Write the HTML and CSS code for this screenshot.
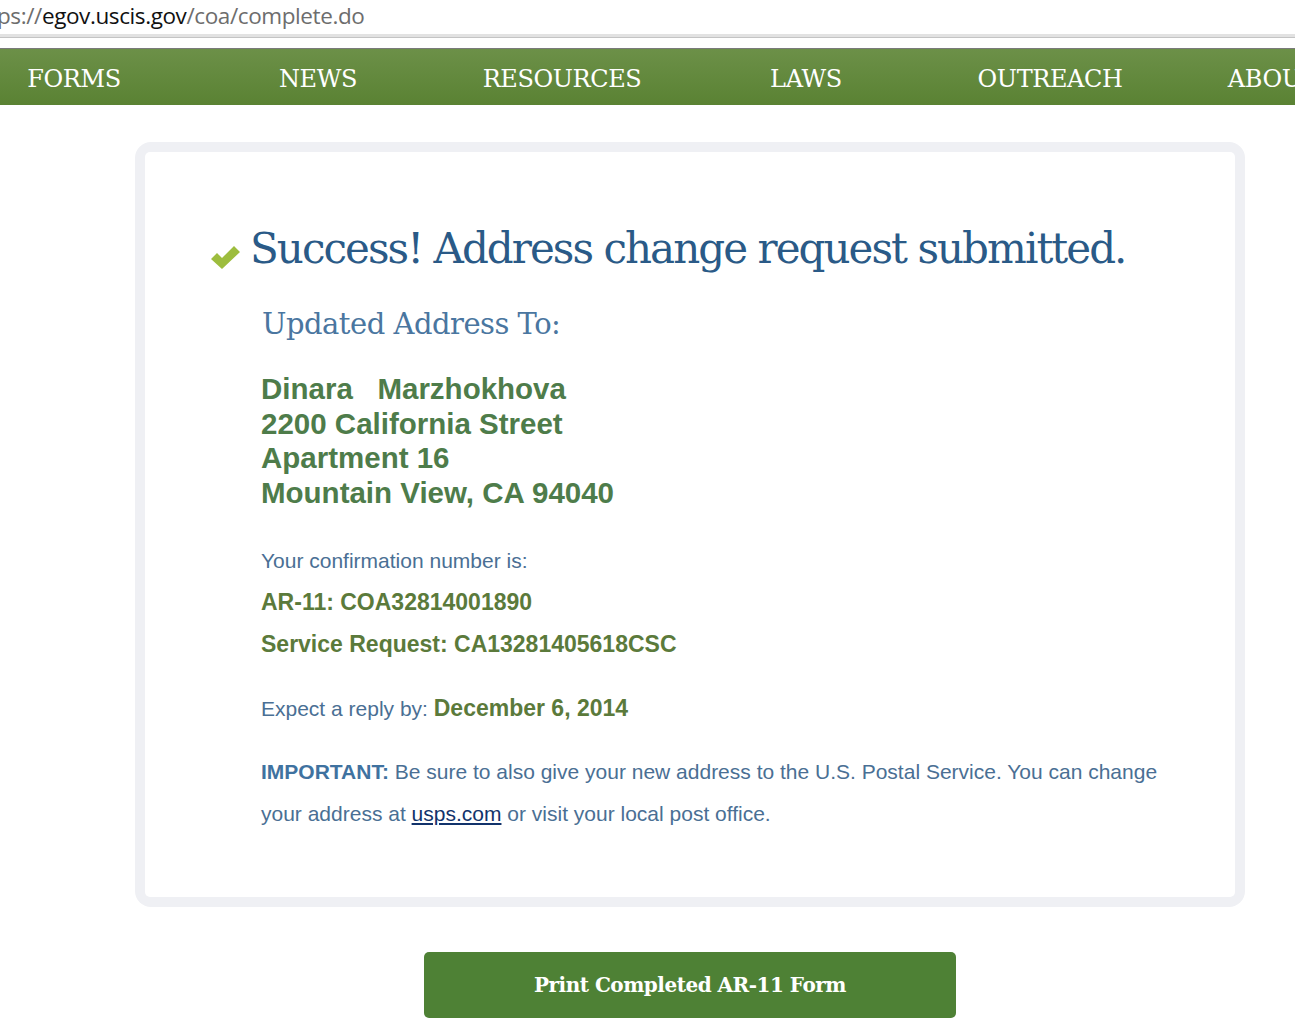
FILE: index.html
```html
<!DOCTYPE html>
<html lang="en">
<head>
<meta charset="utf-8">
<title>Address change request submitted</title>
<link rel="stylesheet" href="styles.css">
</head>
<body>
<div class="urlbar"><span class="proto">ps://</span><span class="domain">egov.uscis.gov</span><span class="path">/coa/complete.do</span></div>
<div class="chrome-sep"></div>
<nav class="topnav">
  <a class="nav-item">FORMS</a>
  <a class="nav-item">NEWS</a>
  <a class="nav-item">RESOURCES</a>
  <a class="nav-item">LAWS</a>
  <a class="nav-item">OUTREACH</a>
  <a class="nav-item">ABOUT US</a>
</nav>
<main class="page">
  <section class="card">
    <div class="card-inner">
      <h1 class="success">
        <svg class="check" width="31" height="25" viewBox="0 0 31 25"><path d="M1 15 L7 9 L12 14 L24 2 L30 8 L12 25 Z" fill="#9dbd3e"/></svg>
        <span>Success! Address change request submitted.</span>
      </h1>
      <div class="content">
        <h2 class="updated">Updated Address To:</h2>
        <div class="address">
          <div>Dinara&nbsp;&nbsp;&nbsp;Marzhokhova</div>
          <div>2200 California Street</div>
          <div>Apartment 16</div>
          <div>Mountain View, CA 94040</div>
        </div>
        <p class="label">Your confirmation number is:</p>
        <p class="code">AR-11: COA32814001890</p>
        <p class="code">Service Request: CA13281405618CSC</p>
        <p class="expect">Expect a reply by: <strong>December 6, 2014</strong></p>
        <p class="important"><strong>IMPORTANT:</strong> Be sure to also give your new address to the U.S. Postal Service. You can change your address at <a href="#" class="link">usps.com</a> or visit your local post office.</p>
      </div>
    </div>
  </section>
  <div class="actions">
    <button class="print-btn">Print Completed AR-11 Form</button>
  </div>
</main>
</body>
</html>
```
FILE: styles.css
```css
html, body {
  margin: 0;
  padding: 0;
  background: #ffffff;
  overflow: hidden;
}
body {
  width: 1295px;
  height: 1026px;
  font-family: "Liberation Sans", Arial, sans-serif;
}
.urlbar {
  height: 34px;
  line-height: 32px;
  font-family: "Open Sans", "Noto Sans", sans-serif;
  font-size: 22.5px;
  color: #6d6d6d;
  white-space: nowrap;
  margin-left: -3px;
  letter-spacing: -0.4px;
}
.urlbar .domain { color: #111111; }
.chrome-sep {
  height: 3px;
  background: #e2e2e2;
  border-bottom: 1px solid #c4c4c4;
  margin-bottom: 10px;
}
.topnav {
  display: flex;
  height: 56px;
  border-top: 1px solid #7a7a7a;
  background: linear-gradient(#6c9048, #5a8233);
  margin-left: -48px;
  white-space: nowrap;
}
.nav-item {
  flex: 0 0 244px;
  text-align: center;
  color: #ffffff;
  font-family: "DejaVu Serif", Georgia, serif;
  font-size: 24px;
  line-height: 61px;
  letter-spacing: -0.4px;
}
.page {
  padding-top: 37px;
}
.card {
  margin-left: 135px;
  width: 1110px;
  box-sizing: border-box;
  background: #eff0f4;
  border-radius: 16px;
  padding: 10px;
}
.card-inner {
  background: #ffffff;
  border-radius: 5px;
  height: 745px;
  box-sizing: border-box;
  padding: 72px 0 0 65px;
}
.success {
  margin: 0;
  display: flex;
  align-items: center;
  gap: 9px;
  font-family: "DejaVu Serif", Georgia, serif;
  font-weight: normal;
  font-size: 42px;
  color: #2a5a87;
  letter-spacing: -1.95px;
  line-height: 50px;
}
.check { margin-top: 14px; }
.content {
  padding-left: 51px;
}
.updated {
  margin: 30px 0 0 1px;
  font-family: "DejaVu Serif", Georgia, serif;
  font-weight: normal;
  font-size: 29px;
  line-height: 40px;
  color: #4a76a0;
  letter-spacing: -0.5px;
}
.address {
  margin-top: 28px;
  font-weight: bold;
  font-size: 29.5px;
  line-height: 34.5px;
  color: #4e7c4a;
}
.label {
  margin: 38px 0 0;
  font-size: 21px;
  line-height: 26px;
  color: #4a6f94;
}
.code {
  margin: 15px 0 0;
  font-weight: bold;
  font-size: 23px;
  line-height: 26px;
  color: #5b7a3b;
}
.code + .code { margin-top: 16px; }
.expect {
  margin: 38px 0 0;
  font-size: 21px;
  line-height: 26px;
  color: #4a6f94;
}
.expect strong {
  font-size: 23px;
  color: #5b7a3b;
}
.important {
  margin: 29px 0 0;
  max-width: 910px;
  font-size: 21px;
  line-height: 42px;
  color: #4a6f94;
}
.important strong { color: #3f72a0; }
.link {
  color: #12336b;
  text-decoration: underline;
}
.actions {
  display: flex;
  justify-content: center;
  margin-left: 135px;
  width: 1110px;
  padding-top: 45px;
}
.print-btn {
  width: 532px;
  height: 66px;
  border: none;
  border-radius: 5px;
  background: #4e8135;
  color: #ffffff;
  font-family: "DejaVu Serif", Georgia, serif;
  font-weight: bold;
  font-size: 20px;
  letter-spacing: -0.5px;
}
```
